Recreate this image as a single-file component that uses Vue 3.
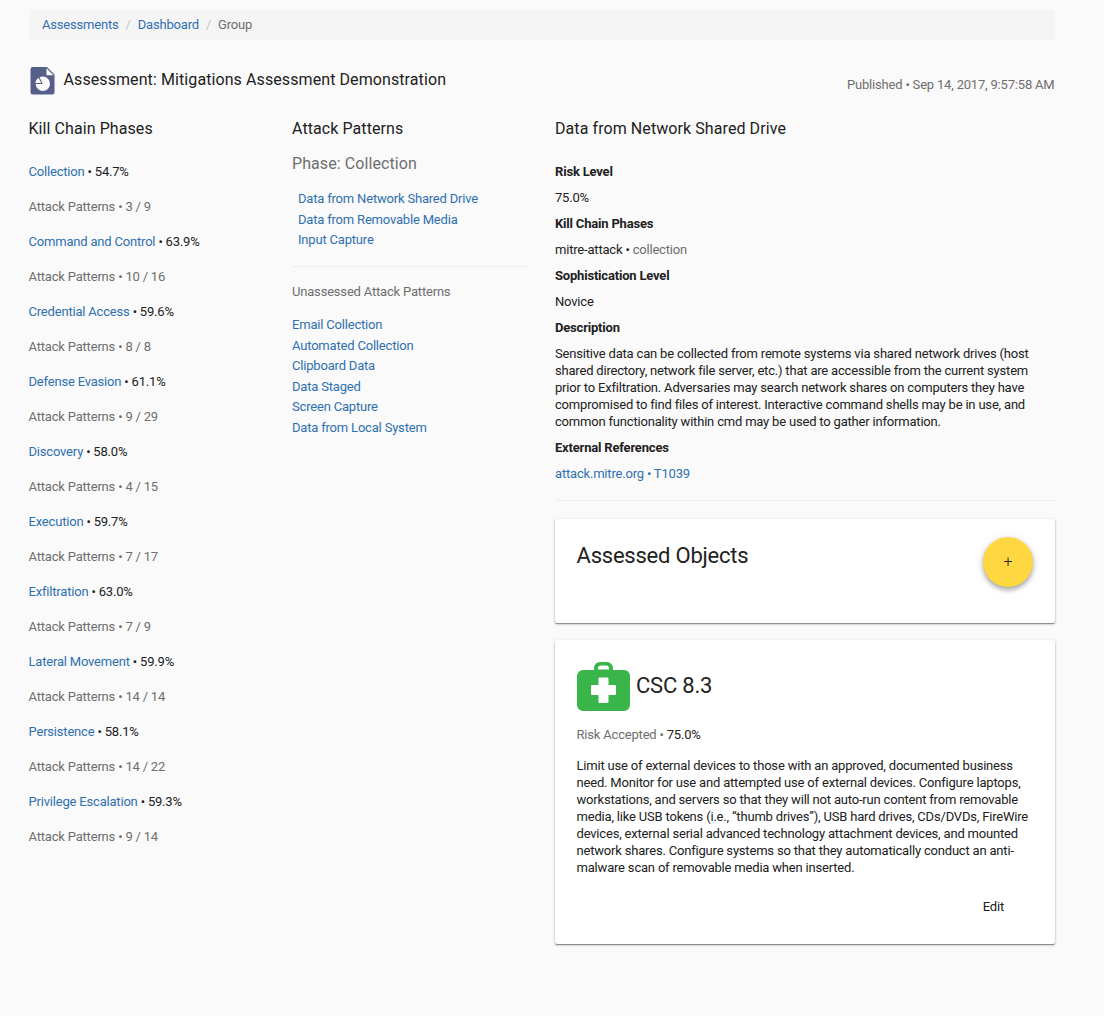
<script setup>
const phases = [
  ['Collection', '54.7%', '3 / 9'],
  ['Command and Control', '63.9%', '10 / 16'],
  ['Credential Access', '59.6%', '8 / 8'],
  ['Defense Evasion', '61.1%', '9 / 29'],
  ['Discovery', '58.0%', '4 / 15'],
  ['Execution', '59.7%', '7 / 17'],
  ['Exfiltration', '63.0%', '7 / 9'],
  ['Lateral Movement', '59.9%', '14 / 14'],
  ['Persistence', '58.1%', '14 / 22'],
  ['Privilege Escalation', '59.3%', '9 / 14'],
]
const assessed = ['Data from Network Shared Drive', 'Data from Removable Media', 'Input Capture']
const unassessed = ['Email Collection', 'Automated Collection', 'Clipboard Data', 'Data Staged', 'Screen Capture', 'Data from Local System']
const description = [
  'Sensitive data can be collected from remote systems via shared network drives (host',
  'shared directory, network file server, etc.) that are accessible from the current system',
  'prior to Exfiltration. Adversaries may search network shares on computers they have',
  'compromised to find files of interest. Interactive command shells may be in use, and',
  'common functionality within cmd may be used to gather information.',
]
const mitigation = [
  'Limit use of external devices to those with an approved, documented business',
  'need. Monitor for use and attempted use of external devices. Configure laptops,',
  'workstations, and servers so that they will not auto-run content from removable',
  'media, like USB tokens (i.e., “thumb drives”), USB hard drives, CDs/DVDs, FireWire',
  'devices, external serial advanced technology attachment devices, and mounted',
  'network shares. Configure systems so that they automatically conduct an anti-',
  'malware scan of removable media when inserted.',
]
</script>

<template>
  <main class="page">
    <nav class="crumbs">
      <a>Assessments</a><i>/</i><a>Dashboard</a><i>/</i><span>Group</span>
    </nav>
    <header class="head">
      <svg class="doc" width="25" height="28" viewBox="0 0 25 28">
        <path fill="#565f89" d="M2.500 0H17l7.500 7.500V25a2.500 2.500 0 0 1-2.500 2.500H3A2.500 2.500 0 0 1 .500 25V2.500A2.500 2.500 0 0 1 2.500 0z" />
        <path fill="#fafafa" d="M16.500 1.300v7h7z" />
        <path fill="#fafafa" d="M12.800 17L9.600 10.300A7.200 7.200 0 1 1 5.600 17z" />
        <path fill="#fafafa" d="M11.300 16H5.300A7 7 0 0 1 8.500 10.700z" />
      </svg>
      <h1>Assessment: Mitigations Assessment Demonstration</h1>
      <span class="published">Published • Sep 14, 2017, 9:57:58 AM</span>
    </header>
    <div class="columns">
      <section class="phases">
        <h2>Kill Chain Phases</h2>
        <template v-for="p in phases" :key="p[0]">
          <p><a>{{ p[0] }}</a> • {{ p[1] }}</p>
          <p class="muted">Attack Patterns • {{ p[2] }}</p>
        </template>
      </section>
      <section class="patterns">
        <h2>Attack Patterns</h2>
        <h3>Phase: Collection</h3>
        <ul class="inset"><li v-for="a in assessed" :key="a"><a>{{ a }}</a></li></ul>
        <hr />
        <p class="muted">Unassessed Attack Patterns</p>
        <ul><li v-for="a in unassessed" :key="a"><a>{{ a }}</a></li></ul>
      </section>
      <section class="detail">
        <h2>Data from Network Shared Drive</h2>
        <dl>
          <dt>Risk Level</dt><dd>75.0%</dd>
          <dt>Kill Chain Phases</dt><dd>mitre-attack • <span class="muted">collection</span></dd>
          <dt>Sophistication Level</dt><dd>Novice</dd>
          <dt>Description</dt>
          <dd><div v-for="l in description" :key="l" class="line">{{ l }}</div></dd>
          <dt>External References</dt><dd><a>attack.mitre.org • T1039</a></dd>
        </dl>
        <hr />
        <article class="card objects">
          <h4>Assessed Objects</h4>
          <button class="fab">+</button>
        </article>
        <article class="card control">
          <div class="title">
            <svg width="53" height="50" viewBox="0 0 53 50">
              <path fill="#39b54a" fill-rule="evenodd" d="M17 8V6a6 6 0 0 1 6-6h7a6 6 0 0 1 6 6v2h11a6 6 0 0 1 6 6v29a6 6 0 0 1-6 6H6a6 6 0 0 1-6-6V14a6 6 0 0 1 6-6zM21 7.500h11V6.500a3 3 0 0 0-3-3h-5a3 3 0 0 0-3 3z" />
              <path fill="#fff" d="M22.500 15.500h8a1 1 0 0 1 1 1V23h6.500a1 1 0 0 1 1 1v8a1 1 0 0 1-1 1h-6.500V40a1 1 0 0 1-1 1h-8a1 1 0 0 1-1-1v-7H15a1 1 0 0 1-1-1v-8a1 1 0 0 1 1-1h6.500V16.500a1 1 0 0 1 1-1z" />
            </svg>
            <h4>CSC 8.3</h4>
          </div>
          <p><span class="muted">Risk Accepted •</span> 75.0%</p>
          <div class="copy"><div v-for="l in mitigation" :key="l" class="line">{{ l }}</div></div>
          <button class="edit">Edit</button>
        </article>
      </section>
    </div>
  </main>
</template>

<style>
body { background: #fafafa; }
</style>

<style scoped>
* { box-sizing: border-box; }
.page { font: 13px/17px Roboto, sans-serif; letter-spacing: -.19px; color: #212121; width: 1104px; height: 1016px; padding: 9px 49px 0 29px; background: #fafafa; }
h1, h2, h3, h4, p, ul, dl, dd { margin: 0; padding: 0; font-weight: 400; }
a { color: #2f70b0; }
.muted, .published { color: #6e6e6e; }
.crumbs { height: 31px; background: #f5f5f5; padding: 7px 13px; color: #6e6e6e; border-radius: 3px; }
.crumbs i { font-style: normal; color: #c4c4c4; padding: 0 7px; }
.head { display: flex; height: 79px; padding-top: 27px; }
.doc { margin-left: 1px; flex: none; }
h1 { font-size: 16px; line-height: 24px; letter-spacing: .09px; margin: 1px 0 0 8.500px; }
.published { margin: 9px .5px 0 auto; }
.columns { display: grid; grid-template-columns: 236px 236px 500px; column-gap: 27px; }
h2, h3 { font-size: 16px; line-height: 20px; letter-spacing: .08px; }
.phases h2 { margin-bottom: 24px; }
.phases p { margin-bottom: 18px; }
.phases p, .phases h2 { margin-left: -.5px; }
h3 { color: #6e6e6e; margin: 15px 0; }
li { list-style: none; height: 20.600px; line-height: 20.600px; }
.inset { padding-left: 6px; }
hr { border: 0; border-top: 1px solid #eee; margin: 0; }
.patterns hr { margin: 15px 0 16px; }
.patterns p { margin-bottom: 15.300px; }
dl { margin-top: 24px; }
dt { font-weight: 700; margin-bottom: 9px; }
dd { margin-bottom: 9px; }
.line { white-space: nowrap; }
.detail hr { margin: 18px 0; }
.card { background: #fff; border-radius: 2px; box-shadow: 0 1px 1px rgba(0,0,0,.36), 0 1px 3px rgba(0,0,0,.24); }
.objects { display: flex; justify-content: space-between; height: 104px; padding: 18px 22px; margin-bottom: 17px; }
h4 { font-size: 22px; line-height: 38px; letter-spacing: -.22px; }
.objects h4 { margin-left: -.5px; }
button { font: inherit; letter-spacing: inherit; color: #212121; border: 0; background: none; padding: 0; }
.fab { width: 50px; height: 50px; border-radius: 50%; background: #ffd740; padding-bottom: 2px; font-size: 16px; font-weight: 300; box-shadow: 0 3px 5px rgba(0,0,0,.3), 0 1px 10px rgba(0,0,0,.1); }
.control { height: 304px; padding: 22px; display: flex; flex-direction: column; }
.title { display: flex; height: 64px; gap: 6px; }
.title h4 { margin-top: 5px; }
.control p, .copy { margin-left: -.5px; }
.copy { margin-top: 14px; }
.edit { align-self: flex-end; margin: 22px 29px 0 0; }
</style>
